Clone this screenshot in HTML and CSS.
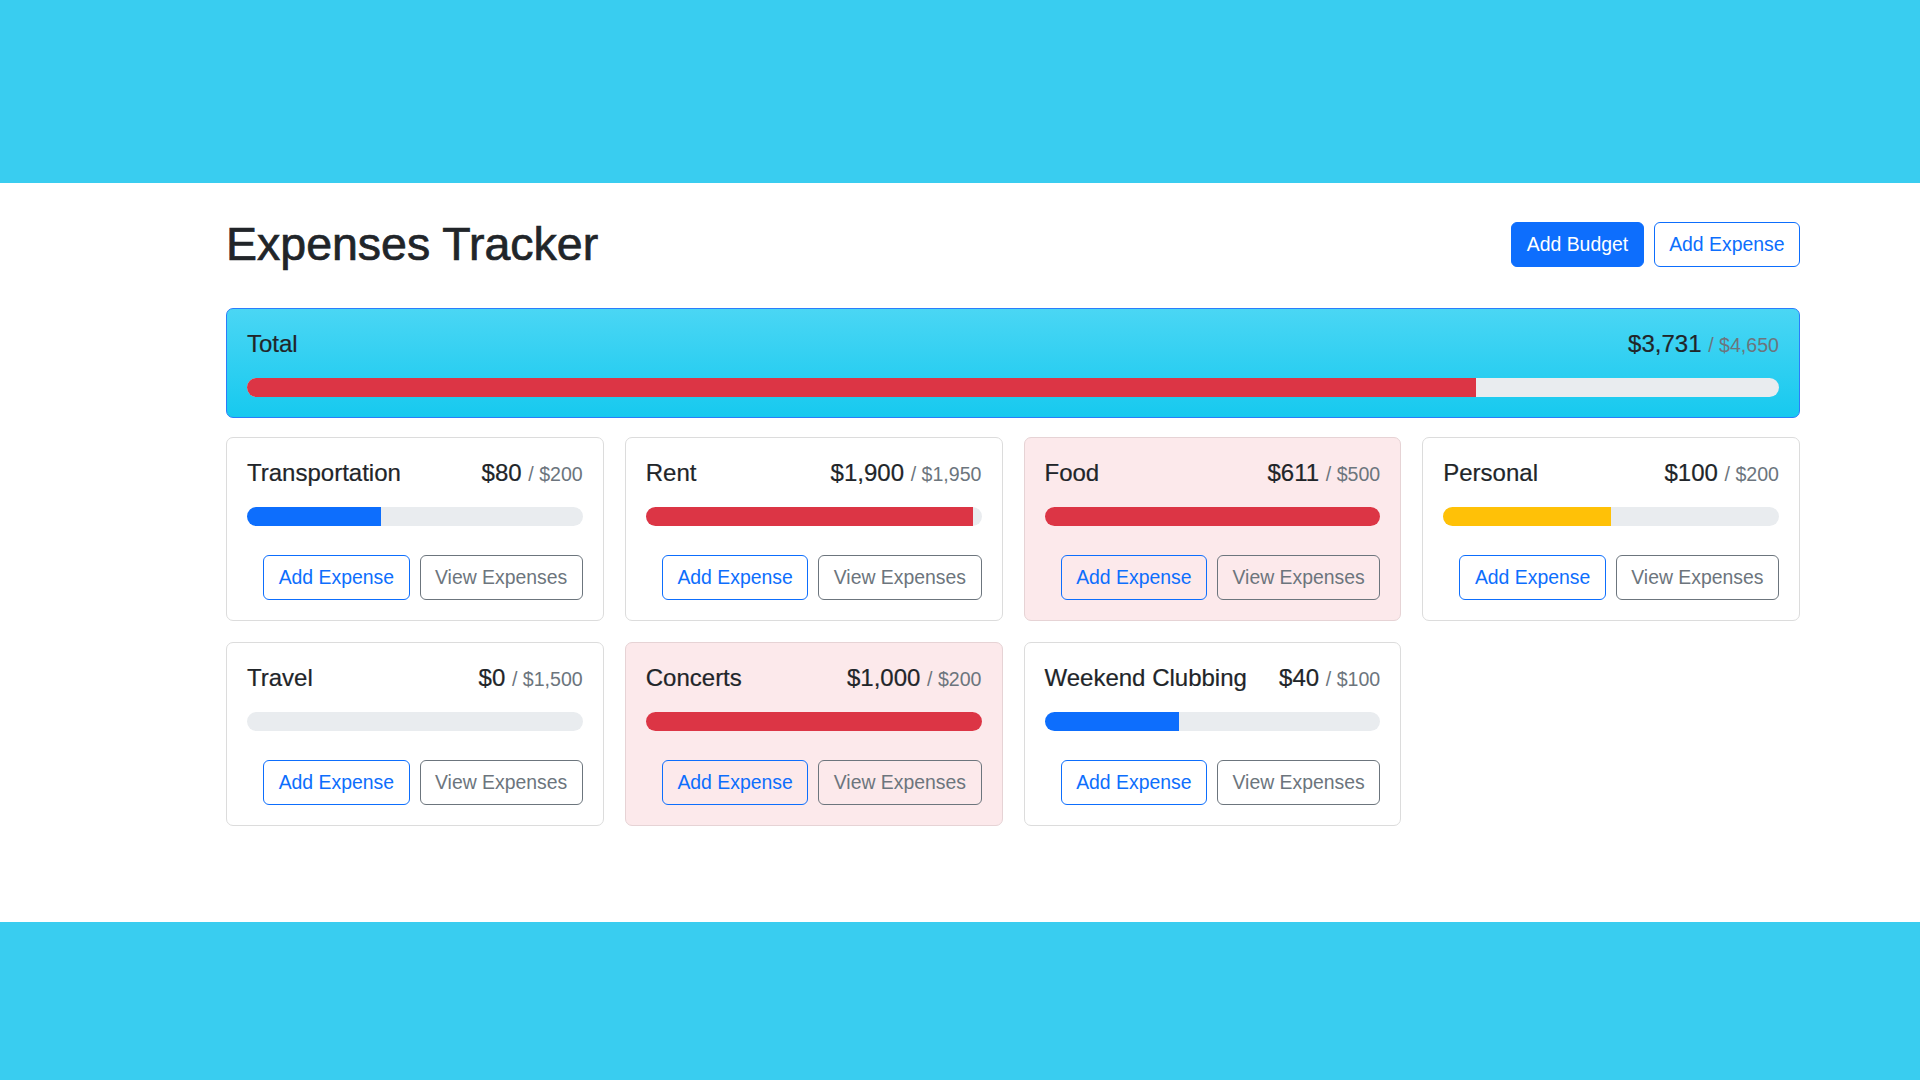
FILE: index.html
```html
<!DOCTYPE html>
<html lang="en">
<head>
<meta charset="utf-8">
<title>Expenses Tracker</title>
<link rel="stylesheet" href="styles.css">
</head>
<body>
<main class="page">
  <header class="header">
    <h1 class="title">Expenses Tracker</h1>
    <div class="header-actions">
      <button class="btn btn-primary">Add Budget</button>
      <button class="btn btn-outline-primary">Add Expense</button>
    </div>
  </header>

  <section class="card card-total">
    <div class="card-head">
      <h2 class="card-title">Total</h2>
      <div class="amount">$3,731 <span class="max">/ $4,650</span></div>
    </div>
    <div class="progress"><div class="bar bar-danger" style="width:80.24%"></div></div>
  </section>

  <div class="grid">
    <article class="card">
      <div class="card-head">
        <h2 class="card-title">Transportation</h2>
        <div class="amount">$80 <span class="max">/ $200</span></div>
      </div>
      <div class="progress"><div class="bar bar-primary" style="width:40%"></div></div>
      <div class="card-actions">
        <button class="btn btn-outline-primary">Add Expense</button>
        <button class="btn btn-outline-secondary">View Expenses</button>
      </div>
    </article>

    <article class="card">
      <div class="card-head">
        <h2 class="card-title">Rent</h2>
        <div class="amount">$1,900 <span class="max">/ $1,950</span></div>
      </div>
      <div class="progress"><div class="bar bar-danger" style="width:97.44%"></div></div>
      <div class="card-actions">
        <button class="btn btn-outline-primary">Add Expense</button>
        <button class="btn btn-outline-secondary">View Expenses</button>
      </div>
    </article>

    <article class="card card-over">
      <div class="card-head">
        <h2 class="card-title">Food</h2>
        <div class="amount">$611 <span class="max">/ $500</span></div>
      </div>
      <div class="progress"><div class="bar bar-danger" style="width:100%"></div></div>
      <div class="card-actions">
        <button class="btn btn-outline-primary">Add Expense</button>
        <button class="btn btn-outline-secondary">View Expenses</button>
      </div>
    </article>

    <article class="card">
      <div class="card-head">
        <h2 class="card-title">Personal</h2>
        <div class="amount">$100 <span class="max">/ $200</span></div>
      </div>
      <div class="progress"><div class="bar bar-warning" style="width:50%"></div></div>
      <div class="card-actions">
        <button class="btn btn-outline-primary">Add Expense</button>
        <button class="btn btn-outline-secondary">View Expenses</button>
      </div>
    </article>

    <article class="card">
      <div class="card-head">
        <h2 class="card-title">Travel</h2>
        <div class="amount">$0 <span class="max">/ $1,500</span></div>
      </div>
      <div class="progress"><div class="bar bar-primary" style="width:0%"></div></div>
      <div class="card-actions">
        <button class="btn btn-outline-primary">Add Expense</button>
        <button class="btn btn-outline-secondary">View Expenses</button>
      </div>
    </article>

    <article class="card card-over">
      <div class="card-head">
        <h2 class="card-title">Concerts</h2>
        <div class="amount">$1,000 <span class="max">/ $200</span></div>
      </div>
      <div class="progress"><div class="bar bar-danger" style="width:100%"></div></div>
      <div class="card-actions">
        <button class="btn btn-outline-primary">Add Expense</button>
        <button class="btn btn-outline-secondary">View Expenses</button>
      </div>
    </article>

    <article class="card">
      <div class="card-head">
        <h2 class="card-title">Weekend Clubbing</h2>
        <div class="amount">$40 <span class="max">/ $100</span></div>
      </div>
      <div class="progress"><div class="bar bar-primary" style="width:40%"></div></div>
      <div class="card-actions">
        <button class="btn btn-outline-primary">Add Expense</button>
        <button class="btn btn-outline-secondary">View Expenses</button>
      </div>
    </article>
  </div>
</main>
</body>
</html>
```

FILE: styles.css
```css
* {
  box-sizing: border-box;
}

html,
body {
  margin: 0;
}

body {
  background: #39cdf0;
  padding: 183px 0 0;
  font-family: "Liberation Sans", Arial, Helvetica, sans-serif;
  color: #212529;
}

.page {
  background: #ffffff;
  height: 739px;
  padding: 34px 120px 0 226px;
}

.header {
  display: flex;
  align-items: center;
  justify-content: space-between;
  margin-bottom: 35px;
}

.title {
  margin: 0;
  font-size: 46.5px;
  line-height: 1.2;
  font-weight: 400;
  -webkit-text-stroke: 0.7px #212529;
}

.header-actions {
  display: flex;
  gap: 10px;
}

.btn {
  font-family: inherit;
  font-size: 19.4px;
  line-height: 29px;
  padding: 7px 14.5px;
  border: 1px solid transparent;
  border-radius: 6px;
  background: transparent;
  cursor: pointer;
}

.btn-primary {
  background: #0d6efd;
  border-color: #0d6efd;
  color: #ffffff;
}

.btn-outline-primary {
  color: #0d6efd;
  border-color: #0d6efd;
}

.btn-outline-secondary {
  color: #6c757d;
  border-color: #6c757d;
}

.card {
  border: 1px solid #dcdcdc;
  border-radius: 7px;
  padding: 21px 20px 20px;
  background: #ffffff;
}

.card-total {
  background: linear-gradient(180deg, #4ad6f4 0%, #17c9ef 100%);
  border-color: #2a7dfb;
  margin-bottom: 19.5px;
}

.card-over {
  background: #fce9eb;
  border-color: #e6d3d5;
}

.card-head {
  display: flex;
  align-items: baseline;
  justify-content: space-between;
  margin-bottom: 19px;
}

.card-title {
  margin: 0;
  font-size: 24px;
  line-height: 1.2;
  font-weight: 400;
  -webkit-text-stroke: 0.2px #212529;
}

.amount {
  font-size: 24px;
  line-height: 1.2;
  -webkit-text-stroke: 0.2px #212529;
}

.amount .max {
  font-size: 19.6px;
  color: #6c757d;
  -webkit-text-stroke: 0;
}

.progress {
  display: flex;
  height: 19px;
  background: #e9ecef;
  border-radius: 10px;
  overflow: hidden;
}

.bar {
  height: 100%;
}

.bar-primary {
  background: #0d6efd;
}

.bar-danger {
  background: #dc3545;
}

.bar-warning {
  background: #ffc107;
}

.card-actions {
  display: flex;
  justify-content: flex-end;
  gap: 10px;
  margin-top: 29px;
}

.grid {
  display: grid;
  grid-template-columns: repeat(4, 1fr);
  gap: 21px;
}
```
